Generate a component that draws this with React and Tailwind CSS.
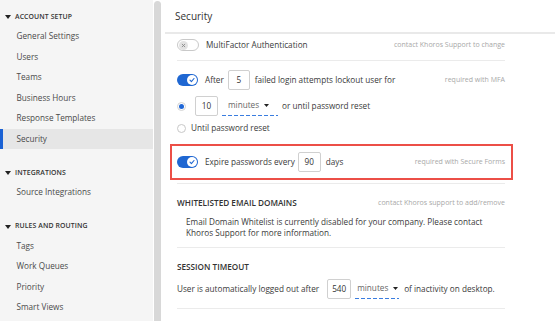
import React from "react";

function Caret() {
  return (
    <svg width="6" height="4" viewBox="0 0 6 4" className="shrink-0">
      <path d="M0 0H6L3 4Z" fill="#222" />
    </svg>
  );
}

function SmallCaret() {
  return (
    <svg width="5" height="3" viewBox="0 0 5 3" className="shrink-0">
      <path d="M0 0H5L2.5 3Z" fill="#222" />
    </svg>
  );
}

function ToggleOn() {
  return (
    <div className="w-[21px] h-[12px] rounded-full bg-[#1f67d2] flex items-center justify-end pr-[1px] shrink-0">
      <div className="w-[10px] h-[10px] rounded-full bg-white flex items-center justify-center">
        <svg width="6" height="6" viewBox="0 0 6 6">
          <path d="M1 3.2L2.4 4.6L5 1.5" fill="none" stroke="#1f67d2" strokeWidth="1.1" strokeLinecap="round" strokeLinejoin="round" />
        </svg>
      </div>
    </div>
  );
}

function ToggleOff() {
  return (
    <div className="w-[22px] h-[12px] rounded-full bg-white border border-[#c9c9c9] flex items-center pl-[1px] shrink-0">
      <div className="w-[9px] h-[9px] rounded-full bg-[#e2e2e2] flex items-center justify-center">
        <svg width="5" height="5" viewBox="0 0 5 5">
          <path d="M1.2 1.2L3.8 3.8M3.8 1.2L1.2 3.8" stroke="#8a8a8a" strokeWidth="0.9" strokeLinecap="round" />
        </svg>
      </div>
    </div>
  );
}

function Box({ v, w }) {
  return (
    <div className={`${w} h-[20px] border border-[#d0d0d0] rounded-[2px] flex items-center justify-center text-[8.2px] text-[#333] shrink-0 bg-white`}>
      {v}
    </div>
  );
}

function Dashed() {
  return <div className="h-[1px] w-full bg-[linear-gradient(90deg,#3a7de0_0_4px,transparent_4px_6px)] bg-[length:6px_1px] bg-repeat-x" />;
}

function Sep({ mt }) {
  return <div className={`${mt} h-[1px] w-[328px] bg-[#ebebeb]`} />;
}

function Hint({ children }) {
  return <span className="ml-auto text-[7px] text-[#a8a8a8] whitespace-nowrap">{children}</span>;
}

function SideHeader({ children }) {
  return (
    <div className="h-[12px] flex items-center pl-[5px] gap-[4px]">
      <Caret />
      <span className="text-[6.9px] font-semibold text-[#333] tracking-[0.1px] whitespace-nowrap">{children}</span>
    </div>
  );
}

function SideItem({ children, active }) {
  if (active) {
    return (
      <div className="h-[20.5px] flex items-center pl-[13.5px] border-l-[3px] border-[#1b62d4] bg-[#e6e6e6] text-[8.2px] text-[#4a4a4a] whitespace-nowrap">
        {children}
      </div>
    );
  }
  return (
    <div className="h-[20.5px] flex items-center pl-[16.5px] text-[8.2px] text-[#4a4a4a] whitespace-nowrap">
      {children}
    </div>
  );
}

export default function App() {
  return (
    <div className="w-[555px] h-[321px] overflow-hidden flex bg-white font-['Open_Sans',sans-serif]">
      {/* Sidebar */}
      <div className="w-[153px] h-full bg-[#f5f5f5] pt-[11px] shrink-0">
        <div className="mb-[18px]">
          <SideHeader>ACCOUNT SETUP</SideHeader>
          <div className="mt-[3px]">
            <SideItem>General Settings</SideItem>
            <SideItem>Users</SideItem>
            <SideItem>Teams</SideItem>
            <SideItem>Business Hours</SideItem>
            <SideItem>Response Templates</SideItem>
            <SideItem active>Security</SideItem>
          </div>
        </div>
        <div className="mb-[18px]">
          <SideHeader>INTEGRATIONS</SideHeader>
          <div className="mt-[3px]">
            <SideItem>Source Integrations</SideItem>
          </div>
        </div>
        <div>
          <SideHeader>RULES AND ROUTING</SideHeader>
          <div className="mt-[3px]">
            <SideItem>Tags</SideItem>
            <SideItem>Work Queues</SideItem>
            <SideItem>Priority</SideItem>
            <SideItem>Smart Views</SideItem>
          </div>
        </div>
      </div>

      {/* Scrollbar gutter */}
      <div className="w-[9px] h-full bg-white shrink-0 pl-[1px] pt-[1px]">
        <div className="w-[7px] h-[340px] rounded-full bg-[#d8d8d8]" />
      </div>

      {/* Main */}
      <div className="flex-1 h-full pl-[3px]">
        <div className="h-[34px] border-b-2 border-[#e9e9e9] flex items-center pl-[10px]">
          <span className="text-[10px] text-[#333]">Security</span>
        </div>

        <div className="pl-[12px] text-[8.2px] text-[#3a3a3a]">
          {/* MFA */}
          <div className="w-[328px] h-[22px] flex items-center">
            <ToggleOff />
            <span className="ml-[7px] whitespace-nowrap">MultiFactor Authentication</span>
            <Hint>contact Khoros Support to change</Hint>
          </div>
          <Sep mt="mt-[4px]" />

          {/* After N failed */}
          <div className="mt-[9px] w-[328px] h-[20px] flex items-center">
            <ToggleOn />
            <span className="ml-[7px]">After</span>
            <div className="ml-[4px]"><Box v="5" w="w-[22px]" /></div>
            <span className="ml-[5px] whitespace-nowrap">failed login attempts lockout user for</span>
            <Hint>required with MFA</Hint>
          </div>

          {/* radio minutes */}
          <div className="mt-[6px] w-[328px] h-[20px] flex items-center">
            <div className="w-[9px] h-[9px] rounded-full border border-[#d3d3d3] bg-white flex items-center justify-center shrink-0">
              <div className="w-[5px] h-[5px] rounded-full bg-[#1f66d6]" />
            </div>
            <div className="ml-[9px]"><Box v="10" w="w-[23px]" /></div>
            <div className="ml-[4px] w-[56px] h-[20px] flex flex-col shrink-0">
              <div className="flex-1 flex items-center pl-[6px]">
                <span className="text-[#666]">minutes</span>
                <span className="ml-[5px]"><SmallCaret /></span>
              </div>
              <Dashed />
            </div>
            <span className="ml-[4px] whitespace-nowrap">or until password reset</span>
          </div>

          {/* radio until reset */}
          <div className="mt-[5px] w-[328px] h-[14px] flex items-center">
            <div className="w-[9px] h-[9px] rounded-full border border-[#c8c8c8] bg-white shrink-0" />
            <span className="ml-[5px] whitespace-nowrap">Until password reset</span>
          </div>

          {/* highlighted expire row */}
          <div className="mt-[9px] -ml-[7px] w-[343px] h-[36px] border-2 border-[#ec4f47] pl-[5px] pr-[6px] flex items-center">
            <div className="w-[328px] h-[20px] flex items-center">
              <ToggleOn />
              <span className="ml-[7px] whitespace-nowrap">Expire passwords every</span>
              <div className="ml-[3px]"><Box v="90" w="w-[23px]" /></div>
              <span className="ml-[5px]">days</span>
              <Hint>required with Secure Forms</Hint>
            </div>
          </div>
          <Sep mt="mt-[3px]" />

          {/* Whitelisted */}
          <div className="mt-[13px] w-[328px] h-[12px] flex items-center">
            <span className="font-semibold text-[#333] whitespace-nowrap">WHITELISTED EMAIL DOMAINS</span>
            <Hint>contact Khoros support to add/remove</Hint>
          </div>
          <p className="mt-[6.5px] pl-[9px] leading-[11px] text-[#3a3a3a] whitespace-nowrap">
            Email Domain Whitelist is currently disabled for your company. Please contact
            <br />
            Khoros Support for more information.
          </p>
          <Sep mt="mt-[9.5px]" />

          {/* Session timeout */}
          <div className="mt-[13px] w-[328px] h-[12px] flex items-center">
            <span className="font-semibold text-[#333] whitespace-nowrap">SESSION TIMEOUT</span>
          </div>
          <div className="mt-[6px] w-[328px] h-[20px] flex items-center">
            <span className="whitespace-nowrap">User is automatically logged out after</span>
            <div className="ml-[8px]"><Box v="540" w="w-[24px]" /></div>
            <div className="ml-[4px] w-[44px] h-[20px] flex flex-col shrink-0">
              <div className="flex-1 flex items-center pl-[2px]">
                <span className="text-[#666]">minutes</span>
                <span className="ml-[5px]"><SmallCaret /></span>
              </div>
              <Dashed />
            </div>
            <span className="ml-[5px] whitespace-nowrap">of inactivity on desktop.</span>
          </div>
          <Sep mt="mt-[9px]" />
        </div>
      </div>
    </div>
  );
}
